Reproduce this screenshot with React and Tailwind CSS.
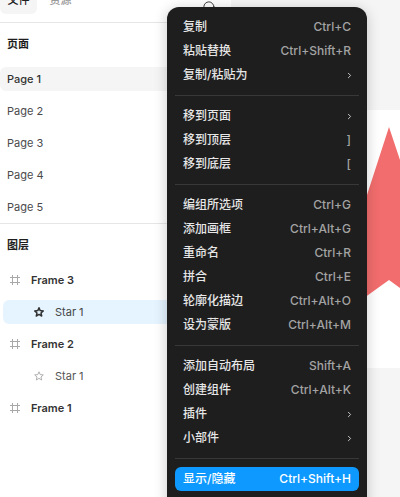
import React from "react";
import { Search, ChevronRight } from "lucide-react";

const sections = [
  [["复制", "Ctrl+C"], ["粘贴替换", "Ctrl+Shift+R"], ["复制/粘贴为", ">"]],
  [["移到页面", ">"], ["移到顶层", "]"], ["移到底层", "["]],
  [["编组所选项", "Ctrl+G"], ["添加画框", "Ctrl+Alt+G"], ["重命名", "Ctrl+R"], ["拼合", "Ctrl+E"], ["轮廓化描边", "Ctrl+Alt+O"], ["设为蒙版", "Ctrl+Alt+M"]],
  [["添加自动布局", "Shift+A"], ["创建组件", "Ctrl+Alt+K"], ["插件", ">"], ["小部件", ">"]],
  [["显示/隐藏", "Ctrl+Shift+H", true]],
];

function FrameIcon() {
  return (
    <svg width="12" height="12" viewBox="0 0 12 12" fill="none" stroke="#a8a8a8" strokeWidth="1" className="shrink-0">
      <path d="M3.5 1V11M8.5 1V11M1 3.5H11M1 8.5H11" />
    </svg>
  );
}

function StarIcon({ dark }) {
  return (
    <svg width="12" height="12" viewBox="0 0 12 12" fill="none" stroke={dark ? "#333333" : "#b0b0b0"} strokeWidth={dark ? 1.5 : 1} strokeLinejoin="round" className="shrink-0">
      <path d="M6 1.8L7.2 4.6L10.3 4.9L8 7L8.7 10L6 8.4L3.3 10L4 7L1.7 4.9L4.8 4.6Z" />
    </svg>
  );
}

function MenuRow({ label, hint, active }) {
  return (
    <div className={`flex h-6 items-center justify-between rounded-md px-2 text-xs font-medium ${active ? "bg-[#0d99ff] text-white" : "text-[#e6e6e6]"}`}>
      <span>{label}</span>
      {hint === ">" ? (
        <ChevronRight size={9} strokeWidth={2.5} className="-mr-[3px] text-[#d0d0d0]" />
      ) : (
        <span className={active ? "text-white" : "text-[#a3a3a3]"}>{hint}</span>
      )}
    </div>
  );
}

export default function App() {
  return (
    <div className="relative flex h-[497px] w-[400px] overflow-hidden bg-white font-['Inter','Noto_Sans_CJK_SC',sans-serif]">
      <aside className="flex w-[231px] shrink-0 flex-col bg-white">
        <div className="flex h-[23px] shrink-0 items-end justify-between border-b border-[#e6e6e6] pb-[8px] pr-[14px]">
          <div className="flex items-end gap-[2px]">
            <div className="flex h-[28px] w-[37px] items-center justify-center rounded-md bg-[#f5f5f5] text-[11px] font-medium text-[#1e1e1e]">文件</div>
            <div className="ml-[3px] flex h-[28px] w-[37px] items-center justify-center text-[11px] font-medium text-[#9a9a9a]">资源</div>
          </div>
          <Search size={15} strokeWidth={1.5} className="mb-[-1px] text-[#333333]" />
        </div>
        <div className="flex h-[44px] items-center pb-[2px] pl-[7px] text-[11px] font-semibold text-[#1e1e1e]">页面</div>
        <div className="flex flex-col gap-2">
          <div className="flex h-6 items-center rounded-l-md bg-[#f5f5f5] pl-[7px] text-[11px] font-medium text-[#333333]">Page 1</div>
          {["Page 2", "Page 3", "Page 4", "Page 5"].map((p) => (
            <div key={p} className="flex h-6 items-center pl-[7px] text-[11px] text-[#4a4a4a]">{p}</div>
          ))}
        </div>
        <div className="mt-[4px] border-t border-[#e6e6e6]" />
        <div className="flex h-[41px] items-center pt-[2px] pl-[7px] text-[11px] font-semibold text-[#1e1e1e]">图层</div>
        <div className="mt-[3px] flex flex-col gap-2">
          <div className="flex h-6 items-center gap-[10px] pl-[9px] text-[11px] font-semibold text-[#333333]"><FrameIcon />Frame 3</div>
          <div className="ml-[3px] flex h-6 items-center gap-[10px] rounded-l-md bg-[#e5f4ff] pl-[30px] text-[11px] text-[#444444]"><StarIcon dark />Star 1</div>
          <div className="flex h-6 items-center gap-[10px] pl-[9px] text-[11px] font-semibold text-[#333333]"><FrameIcon />Frame 2</div>
          <div className="ml-[3px] flex h-6 items-center gap-[10px] pl-[30px] text-[11px] text-[#555555]"><StarIcon />Star 1</div>
          <div className="flex h-6 items-center gap-[10px] pl-[9px] text-[11px] font-semibold text-[#333333]"><FrameIcon />Frame 1</div>
        </div>
      </aside>

      <main className="relative flex-1 bg-[#f5f5f5]">
        <div className="absolute left-[10px] top-[110px] h-[258px] w-[159px] bg-white">
          <svg width="159" height="258" viewBox="241 110 159 258" className="block">
            <polygon points="389,127 367,195 300,195 350,245 325,326 389,280 400,288 400,160" fill="#f26d6d" />
          </svg>
        </div>
      </main>

      <div className="absolute left-[167px] top-[7px] h-[520px] w-[200px] rounded-xl bg-[#1e1e1e] px-2 py-[8px] shadow-[0_2px_14px_rgba(0,0,0,0.2)]">
        {sections.map((rows, i) => (
          <div key={i}>
            {i > 0 && <div className="my-2 h-px bg-[#383838]" />}
            {rows.map(([label, hint, active]) => (
              <MenuRow key={label} label={label} hint={hint} active={active} />
            ))}
          </div>
        ))}
      </div>
    </div>
  );
}
